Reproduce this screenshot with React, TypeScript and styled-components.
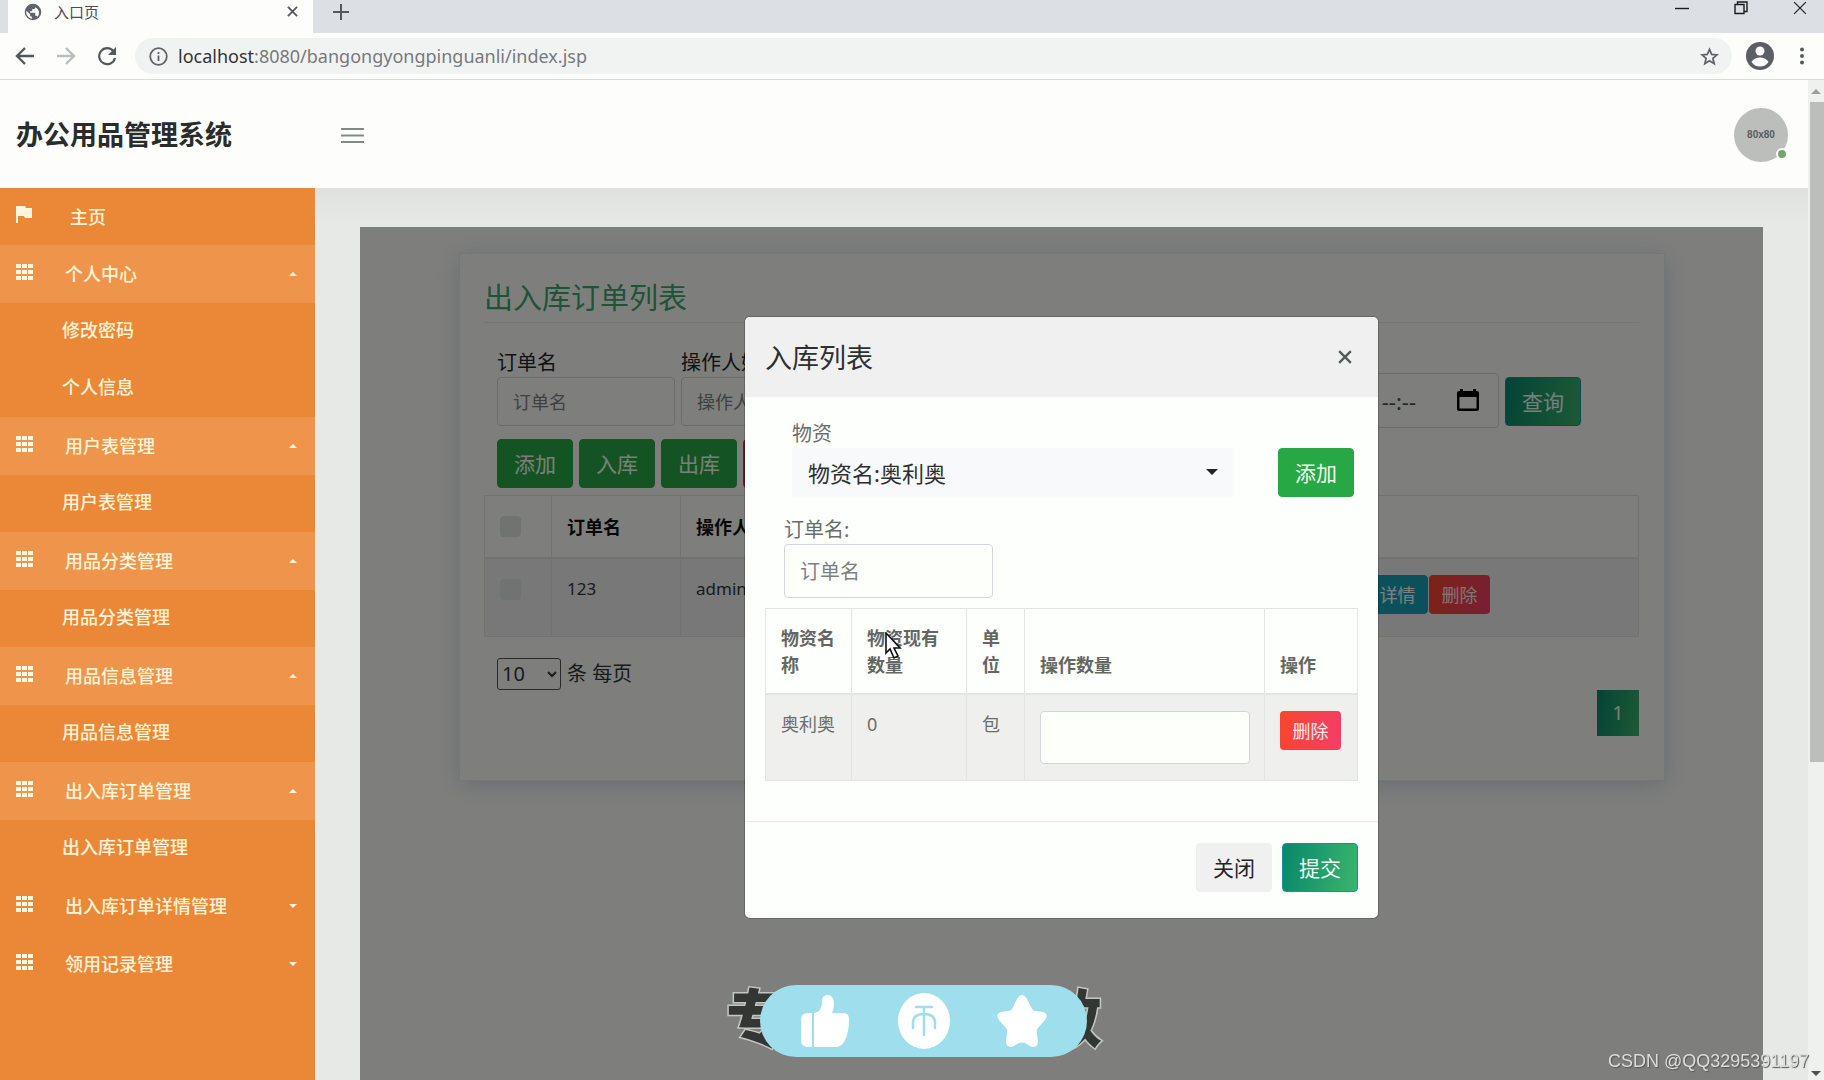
import React from "react";
import styled, { createGlobalStyle, css } from "styled-components";

const GlobalStyle = createGlobalStyle`
  *, *::before, *::after { box-sizing: border-box; }
  body {
    margin: 0;
    overflow: hidden;
    background: #fdfefc;
    font-family: "Noto Sans", "Noto Sans CJK SC", sans-serif;
    font-size: 18px;
    color: #212529;
  }
  button, input, select { font-family: inherit; margin: 0; }
  button { cursor: pointer; }
`;

/* ---------- browser window ---------- */

const Window = styled.div`
  display: flex;
  flex-direction: column;
  height: 100vh;
  overflow: hidden;
`;

const TabStrip = styled.div`
  display: flex;
  flex: none;
  height: 33px;
  padding-left: 8px;
  background: #dce0e4;
`;

const Tab = styled.div`
  display: flex;
  align-items: center;
  width: 305px;
  height: 33px;
  padding: 0 15px 10px 16px;
  gap: 12px;
  background: #fdfefc;
  font-size: 15px;
  line-height: 24px;
  color: #4a4d51;
  span { flex: 1; }
`;

const PlainButton = styled.button`
  display: flex;
  align-items: center;
  justify-content: center;
  padding: 0;
  border: 0;
  background: none;
  color: #55585b;
`;

const NewTab = styled(PlainButton)`
  width: 28px;
  height: 24px;
  margin-left: 14px;
`;

const WindowControls = styled.div`
  display: flex;
  align-items: flex-start;
  gap: 43px;
  margin-left: auto;
  padding: 0 16px 0 0;
  button { width: 16px; height: 16px; color: #1c1c1c; }
`;

const Toolbar = styled.div`
  display: flex;
  flex: none;
  align-items: center;
  height: 47px;
  padding: 0 15px 0 15px;
  border-bottom: 1px solid #d9dbdc;
`;

const NavButtons = styled.div`
  display: flex;
  gap: 21px;
  margin-right: 18px;
  button { width: 20px; height: 20px; }
`;

const AddressBar = styled.div`
  display: flex;
  flex: 1;
  align-items: center;
  height: 36px;
  padding: 0 13px 0 14px;
  gap: 10px;
  border-radius: 18px;
  background: #f1f3f3;
  color: #5f6368;
`;

const Address = styled.div`
  flex: 1;
  font-size: 18px;
  line-height: 24px;
  color: #777a7d;
  b { font-weight: 400; color: #303336; }
`;

const ToolbarEnd = styled.div`
  display: flex;
  align-items: center;
  gap: 21px;
  margin-left: 14px;
`;

const Viewport = styled.div`
  display: flex;
  flex: 1;
  min-height: 0;
`;

const ScrollBar = styled.div`
  display: flex;
  flex: none;
  flex-direction: column;
  align-items: center;
  width: 16px;
  padding: 9px 0 4px;
  background: #eff1ee;
  color: #555;
`;

const ScrollThumb = styled.div`
  width: 14px;
  height: 660px;
  margin: 8px 0 auto 2px;
  background: #bcbebb;
`;

/* ---------- admin page ---------- */

const Page = styled.div`
  display: flex;
  flex: 1;
  flex-direction: column;
  min-width: 0;
`;

const PageHeader = styled.header`
  display: flex;
  flex: none;
  align-items: center;
  height: 108px;
  padding: 2px 20px 0 16px;
  background: #fdfefc;
`;

const Brand = styled.h1`
  width: 325px;
  margin: 0;
  font-size: 27px;
  line-height: 36px;
  font-weight: 700;
  color: #2a2c2b;
`;

const MenuToggle = styled(PlainButton)`
  color: #858785;
`;

const Avatar = styled.div`
  position: relative;
  display: flex;
  align-items: center;
  justify-content: center;
  width: 54px;
  height: 54px;
  margin-left: auto;
  border-radius: 50%;
  background: #bcbebb;
  font: 700 10px/16px "Liberation Sans", sans-serif;
  color: #5a5c5a;
  &::after {
    content: "";
    position: absolute;
    right: 0;
    bottom: 2px;
    width: 12px;
    height: 12px;
    border: 2px solid #fdfefc;
    border-radius: 50%;
    background: #6fa86f;
  }
`;

const PageBody = styled.div`
  display: grid;
  grid-template-columns: 315px 1fr;
  flex: 1;
  min-height: 0;
`;

const Sidebar = styled.nav`
  background: #eb8837;
  overflow: hidden;
`;

const MenuLink = styled.a<{ $kind: "home" | "group" | "leaf"; $open?: boolean }>`
  display: flex;
  align-items: center;
  height: ${(p) => (p.$kind === "group" ? 58 : 57)}px;
  padding: ${(p) => (p.$kind === "leaf" ? "0 18px 3px 62px" : "0 18px 0 16px")};
  background: ${(p) => (p.$open ? "#ee954b" : "transparent")};
  font-size: 18px;
  line-height: 28px;
  font-weight: 500;
  color: #fdf3d8;
  text-decoration: none;
  svg { margin-bottom: 4px; }
  span { flex: 1; margin-left: ${(p) => (p.$kind === "home" ? 38 : p.$kind === "group" ? 32 : 0)}px; }
`;

const Caret = styled.i<{ $up?: boolean; $size?: number; $color?: string }>`
  border: ${(p) => p.$size ?? 4}px solid transparent;
  ${(p) =>
    p.$up
      ? css`border-bottom-color: ${p.$color ?? "#fff3dc"}; border-top-width: 0;`
      : css`border-top-color: ${p.$color ?? "#fff3dc"}; border-bottom-width: 0;`}
`;

const Main = styled.main`
  display: flex;
  min-width: 0;
  min-height: 0;
  padding: 39px 45px 0;
  background: linear-gradient(#dfe1de, #e7e9e6 38px);
`;

const Frame = styled.section`
  position: relative;
  flex: 1;
  min-width: 0;
  overflow: hidden;
  padding: 26px 98px 0 99px;
  background: #fdfffb;
`;

const Card = styled.div`
  padding: 24px 25px 44px 24px;
  border: 1px solid #ebedf2;
  background: #fdfffb;
  box-shadow: 0 4px 24px rgba(60, 60, 110, 0.22);
`;

const CardTitle = styled.h2`
  margin: 0;
  padding-bottom: 4px;
  border-bottom: 1px solid #eceeeb;
  font-size: 29px;
  line-height: 40px;
  font-weight: 400;
  color: #3aa86c;
`;

const FilterForm = styled.form`
  display: flex;
  align-items: flex-end;
  gap: 6px;
  margin-top: 22px;
  padding-left: 13px;
`;

const Field = styled.label<{ $width: number; $lift?: boolean }>`
  position: relative;
  display: flex;
  flex-direction: column;
  width: ${(p) => p.$width}px;
  padding-bottom: ${(p) => (p.$lift ? 2 : 0)}px;
  font-size: 20px;
  line-height: 28px;
  white-space: nowrap;
  svg { position: absolute; right: 20px; bottom: 16px; }
`;

const TextBox = styled.input<{ $h: number; $size?: number; $date?: boolean }>`
  width: 100%;
  height: ${(p) => p.$h}px;
  padding: 0 ${(p) => (p.$date ? 82 : 15)}px 0 15px;
  border: 1px solid #d3d6d8;
  border-radius: 4px;
  background: #fdfffb;
  font-size: ${(p) => p.$size ?? 18}px;
  text-align: ${(p) => (p.$date ? "right" : "left")};
  color: #495057;
  &::placeholder { color: ${(p) => (p.$date ? "#495057" : "#7c8084")}; opacity: 1; }
`;

type Tone = "success" | "danger" | "brand" | "light" | "info" | "hot";

const tones: Record<Tone, string> = {
  success: "background: #28a745; border-color: #28a745; color: #f4fff4;",
  danger: "background: #dc3545; border-color: #dc3545; color: #fff;",
  brand: "background: linear-gradient(100deg, #07886a, #3cb46e); border-color: #1990a4; color: #effff4;",
  light: "background: #eff0ef; border-color: #eff0ef; color: #212529;",
  info: "background: #17a2b8; border-color: #17a2b8; color: #fff;",
  hot: "background: linear-gradient(100deg, #f9452d, #f33e68); border-color: transparent; background-origin: border-box; color: #ffe9ec;",
};

const Button = styled.button<{ $tone: Tone; $small?: boolean }>`
  flex: none;
  width: ${(p) => (p.$small ? 61 : 76)}px;
  height: ${(p) => (p.$small ? 39 : 49)}px;
  padding: 0;
  border: 1px solid;
  border-radius: 4px;
  font-size: ${(p) => (p.$small ? 18 : 21)}px;
  line-height: 28px;
  ${(p) => tones[p.$tone]}
`;

const FilterButton = styled.div`
  display: flex;
  padding-bottom: 2px;
`;

const Actions = styled.div`
  display: flex;
  gap: 6px;
  margin: 11px 0 7px;
  padding-left: 13px;
`;

const Table = styled.table`
  width: 100%;
  border-collapse: collapse;
  table-layout: fixed;
  font-size: 18px;
  line-height: 27px;
  color: #6b6d6b;
  th, td {
    padding: 16px 14px 14px 15px;
    border: 1px solid #e3e5e2;
    text-align: left;
  }
  th {
    vertical-align: bottom;
    border-bottom-width: 2px;
    font-weight: 700;
    color: #646664;
  }
  td {
    padding-bottom: 16px;
    vertical-align: top;
    background: #eff0ee;
  }
  th:first-child, td:first-child { padding-right: 10px; }
`;

const OrdersTable = styled(Table)`
  color: #333638;
  th { padding-bottom: 16px; color: #111; }
  td { height: 78px; font-size: 17px; }
`;

const Check = styled.input.attrs({ type: "checkbox" })`
  display: block;
  appearance: none;
  width: 21px;
  height: 21px;
  margin: 4px 0;
  border-radius: 4px;
  background: #e2e4e4;
`;

const Inline = styled.div`
  display: flex;
  gap: 1px;
`;

const PageSize = styled.label`
  display: flex;
  align-items: center;
  gap: 6px;
  margin-top: 21px;
  padding-left: 13px;
  font-size: 20px;
  line-height: 32px;
  color: #333638;
  select {
    width: 64px;
    height: 32px;
    border: 1px solid #555;
    border-radius: 3px;
    background: #fdfffb;
    font-size: 20px;
    color: #333638;
  }
`;

const Pager = styled.div`
  display: flex;
  justify-content: flex-end;
  button {
    width: 42px;
    height: 46px;
    border: 0;
    background: linear-gradient(100deg, #07886a, #3cb46e);
    font-size: 19px;
    color: #effff4;
  }
`;

/* ---------- dialog ---------- */

const Backdrop = styled.div`
  position: absolute;
  inset: 0;
  display: flex;
  align-items: flex-start;
  justify-content: center;
  padding-top: 90px;
  background: rgba(0, 0, 0, 0.5);
`;

const Dialog = styled.div`
  width: 633px;
  border-radius: 5px;
  overflow: hidden;
  background: #fdfffc;
  box-shadow: 0 0 0 1px rgba(0, 0, 0, 0.2);
  color: #6b6d6b;
`;

const DialogHeader = styled.div`
  display: flex;
  align-items: center;
  justify-content: space-between;
  height: 80px;
  padding: 0 26px 0 20px;
  background: #eff0ef;
  h3 {
    margin: 0;
    padding-top: 2px;
    font-size: 27px;
    line-height: 40px;
    font-weight: 400;
    color: #2d3032;
  }
`;

const DialogBody = styled.div`
  padding: 23px 20px 40px;
`;

const PickRow = styled.div`
  display: flex;
  align-items: flex-end;
  justify-content: space-between;
  margin-bottom: 19px;
  padding: 0 4px 0 27px;
`;

const SelectBox = styled.label`
  position: relative;
  width: 442px;
  font-size: 20px;
  line-height: 28px;
  select {
    display: block;
    width: 100%;
    height: 49px;
    padding: 0 16px;
    appearance: none;
    border: 0;
    background: #f8f9fa;
    font-size: 22px;
    color: #2d3032;
  }
  i { position: absolute; right: 16px; bottom: 22px; }
`;

const OrderField = styled.div`
  margin-bottom: 10px;
  padding-left: 19px;
`;

const DialogFooter = styled.div`
  display: flex;
  justify-content: flex-end;
  gap: 10px;
  padding: 21px 20px 26px;
  border-top: 1px solid #e9ebe9;
`;

const Pointer = styled.svg`
  position: fixed;
  left: 885px;
  top: 632px;
`;

/* ---------- stickers over the page ---------- */

const Sticker = styled.div`
  position: fixed;
  left: 0;
  right: 0;
  bottom: 23px;
  display: flex;
  justify-content: center;
  pointer-events: none;
`;

const Slogan = styled.div`
  position: relative;
  display: flex;
  justify-content: space-between;
  width: 376px;
  height: 72px;
  margin-left: 4px;
  font-size: 62px;
  line-height: 66px;
  font-weight: 900;
  color: #333633;
  -webkit-text-stroke: 3px #c4c6c3;
  paint-order: stroke fill;
`;

const Pill = styled.div`
  position: absolute;
  left: 34px;
  top: 0;
  display: flex;
  align-items: center;
  justify-content: space-between;
  width: 327px;
  height: 72px;
  padding: 0 40px;
  border-radius: 36px;
  background: #9fdfed;
`;

const Watermark = styled.div`
  position: fixed;
  right: 15px;
  bottom: 8px;
  font: 18px/22px "Liberation Sans", sans-serif;
  color: #dcdedb;
  text-shadow: 1px 1px 1px #555;
`;

/* ---------- icons ---------- */

const stroke = (width: number) => ({ fill: "none", stroke: "currentColor", strokeWidth: width });

const Globe = () => (
  <svg width="18" height="18" viewBox="0 0 24 24" fill="#5f6368">
    <path d="M12 1a11 11 0 1 0 0 22 11 11 0 0 0 0-22zM11 20.900C6.500 20.400 3 16.600 3 12c0-.6.100-1.200.2-1.800L8 15v1c0 1.100.9 2 2 2l1 2.900zm6.900-2.500c-.3-.8-1-1.400-1.900-1.400h-1v-3c0-.6-.4-1-1-1H8v-2h2c.6 0 1-.4 1-1V8h2c1.100 0 2-.9 2-2v-.4c2.900 1.200 5 4.100 5 7.400 0 2.100-.8 4-2.100 5.400z" />
  </svg>
);

const Cross = ({ size, width = 2 }: { size: number; width?: number }) => (
  <svg width={size} height={size} viewBox="0 0 12 12" {...stroke(width)}>
    <path d="M1 1l10 10M11 1L1 11" />
  </svg>
);

const Arrow = ({ flip }: { flip?: boolean }) => (
  <svg width="20" height="20" viewBox="0 0 20 20" {...stroke(2.4)}>
    {flip ? <path d="M1 10h17M10 2l8 8-8 8" /> : <path d="M19 10H2M10 2l-8 8 8 8" />}
  </svg>
);

const Grid = () => (
  <svg width="17" height="16" viewBox="0 0 17 16" fill="#fff6e0">
    {[0, 6, 12].map((y) => [0, 6, 12].map((x) => <rect key={x + "-" + y} x={x} y={y} width="5" height="4" />))}
  </svg>
);

const Flag = () => (
  <svg width="16" height="17" viewBox="0 0 16 17" fill="#fff6e0">
    <path d="M0 0h9l1 2h6v10H9l-1-2H2v7H0z" />
  </svg>
);

const CalendarIcon = () => (
  <svg width="22" height="24" viewBox="0 0 22 24" fill="#000">
    <path d="M3 1h3v2h10V1h3v2h1q2 0 2 2v16q0 2-2 2H2q-2 0-2-2V5q0-2 2-2h1zM2.500 9v11.500h17V9z" fillRule="evenodd" />
  </svg>
);

/* ---------- content ---------- */

type MenuGroup = { title: string; children: string[] };

const menu: MenuGroup[] = [
  { title: "个人中心", children: ["修改密码", "个人信息"] },
  { title: "用户表管理", children: ["用户表管理"] },
  { title: "用品分类管理", children: ["用品分类管理"] },
  { title: "用品信息管理", children: ["用品信息管理"] },
  { title: "出入库订单管理", children: ["出入库订单管理"] },
  { title: "出入库订单详情管理", children: [] },
  { title: "领用记录管理", children: [] },
];

const BrowserChrome = () => (
  <>
    <TabStrip>
      <Tab>
        <Globe />
        <span>入口页</span>
        <PlainButton aria-label="关闭标签页"><Cross size={11} /></PlainButton>
      </Tab>
      <NewTab aria-label="新标签页">
        <svg width="16" height="16" viewBox="0 0 16 16" {...stroke(2)}><path d="M8 0v16M0 8h16" /></svg>
      </NewTab>
      <WindowControls>
        <PlainButton aria-label="最小化">
          <svg width="14" height="16" viewBox="0 0 14 16" {...stroke(1.4)}><path d="M0 8.500h14" /></svg>
        </PlainButton>
        <PlainButton aria-label="还原">
          <svg width="14" height="16" viewBox="0 0 14 16" {...stroke(1.4)}><path d="M1 4.500h9v9H1zM3.500 4.500V2H13v9.500h-3" /></svg>
        </PlainButton>
        <PlainButton aria-label="关闭"><Cross size={14} width={1} /></PlainButton>
      </WindowControls>
    </TabStrip>
    <Toolbar>
      <NavButtons>
        <PlainButton aria-label="后退"><Arrow /></PlainButton>
        <PlainButton aria-label="前进" style={{ color: "#bbbdbf" }}><Arrow flip /></PlainButton>
        <PlainButton aria-label="刷新">
          <svg width="20" height="20" viewBox="0 0 20 20" {...stroke(2.2)}>
            <path d="M16.500 5.200A8 8 0 1 0 18 12" />
            <path d="M19 1v8h-8z" fill="currentColor" stroke="none" />
          </svg>
        </PlainButton>
      </NavButtons>
      <AddressBar>
        <svg width="19" height="19" viewBox="0 0 19 19" {...stroke(1.8)}>
          <circle cx="9.500" cy="9.500" r="8.300" />
          <path d="M9.500 8.500v5.500M9.500 5v2" />
        </svg>
        <Address><b>localhost</b>:8080/bangongyongpinguanli/index.jsp</Address>
        <svg width="19" height="19" viewBox="0 0 24 24" {...stroke(2.2)}>
          <path d="M12 3l2.700 6.300 6.800.6-5.200 4.500 1.600 6.700L12 17.500l-5.900 3.600 1.600-6.700L2.500 9.900l6.800-.6z" />
        </svg>
      </AddressBar>
      <ToolbarEnd>
        <PlainButton aria-label="用户">
          <svg width="28" height="28" viewBox="0 0 28 28">
            <circle cx="14" cy="14" r="14" fill="#5b5e62" />
            <circle cx="14" cy="9" r="4.500" fill="#fff" />
            <path d="M5.500 20q2.500-4.500 8.500-4.500t8.500 4.500q-3.200 4.500-8.500 4.500T5.500 20z" fill="#fff" />
          </svg>
        </PlainButton>
        <PlainButton aria-label="菜单">
          <svg width="14" height="18" viewBox="0 0 14 18" fill="currentColor">
            <circle cx="7" cy="2.500" r="2" /><circle cx="7" cy="9" r="2" /><circle cx="7" cy="15.500" r="2" />
          </svg>
        </PlainButton>
      </ToolbarEnd>
    </Toolbar>
  </>
);

const SideMenu = () => (
  <Sidebar>
    <MenuLink href="#home" $kind="home"><Flag /><span>主页</span></MenuLink>
    {menu.map((group) => {
      const open = group.children.length > 0;
      return (
        <React.Fragment key={group.title}>
          <MenuLink href="#group" $kind="group" $open={open}>
            <Grid /><span>{group.title}</span><Caret $up={open} />
          </MenuLink>
          {group.children.map((child) => (
            <MenuLink key={child} href="#page" $kind="leaf"><span>{child}</span></MenuLink>
          ))}
        </React.Fragment>
      );
    })}
  </Sidebar>
);

const DateField = ({ label }: { label: string }) => (
  <Field $width={314}>
    {label}
    <TextBox $h={55} $date $size={22} placeholder="年/月/日 --:--" />
    <CalendarIcon />
  </Field>
);

const OrderList = () => (
  <Card>
    <CardTitle>出入库订单列表</CardTitle>
    <FilterForm onSubmit={(e) => e.preventDefault()}>
      <Field $width={178} $lift>订单名<TextBox $h={49} placeholder="订单名" /></Field>
      <Field $width={178} $lift>操作人姓名<TextBox $h={49} placeholder="操作人姓名" /></Field>
      <DateField label="开始时间" />
      <DateField label="结束时间" />
      <FilterButton><Button $tone="brand">查询</Button></FilterButton>
    </FilterForm>
    <Actions>
      <Button $tone="success">添加</Button>
      <Button $tone="success">入库</Button>
      <Button $tone="success">出库</Button>
      <Button $tone="danger">删除</Button>
    </Actions>
    <OrdersTable>
      <colgroup><col width="67" /><col width="129" /><col /><col /><col width="349" /></colgroup>
      <thead>
        <tr><th><Check aria-label="全选" /></th><th>订单名</th><th>操作人姓名</th><th>操作时间</th><th>操作</th></tr>
      </thead>
      <tbody>
        <tr>
          <td><Check aria-label="选择 123" /></td><td>123</td><td>admin</td><td />
          <td>
            <Inline>
              <Button $tone="info" $small>修改</Button>
              <Button $tone="info" $small>详情</Button>
              <Button $tone="hot" $small>删除</Button>
            </Inline>
          </td>
        </tr>
      </tbody>
    </OrdersTable>
    <PageSize><select defaultValue="10"><option>10</option><option>25</option></select>条 每页</PageSize>
    <Pager><button>1</button></Pager>
  </Card>
);

const StockInDialog = () => (
  <Dialog role="dialog" aria-label="入库列表">
    <DialogHeader>
      <h3>入库列表</h3>
      <PlainButton aria-label="关闭"><Cross size={14} width={2} /></PlainButton>
    </DialogHeader>
    <DialogBody>
      <PickRow>
        <SelectBox>
          物资
          <select><option>物资名:奥利奥</option></select>
          <Caret $size={6} $color="#212529" />
        </SelectBox>
        <Button $tone="success">添加</Button>
      </PickRow>
      <OrderField>
        <Field $width={209}>订单名:<TextBox $h={54} $size={20} placeholder="订单名" /></Field>
      </OrderField>
      <Table>
        <colgroup><col width="86" /><col width="115" /><col width="58" /><col /><col width="93" /></colgroup>
        <thead>
          <tr><th>物资名称</th><th>物资现有数量</th><th>单位</th><th>操作数量</th><th>操作</th></tr>
        </thead>
        <tbody>
          <tr>
            <td>奥利奥</td><td>0</td><td>包</td>
            <td><TextBox $h={53} aria-label="操作数量" /></td>
            <td><Button $tone="hot" $small>删除</Button></td>
          </tr>
        </tbody>
      </Table>
    </DialogBody>
    <DialogFooter>
      <Button $tone="light">关闭</Button>
      <Button $tone="brand">提交</Button>
    </DialogFooter>
  </Dialog>
);

const Stickers = () => (
  <>
    <Sticker>
      <Slogan>
        <span>专</span><span>效</span>
        <Pill>
          <svg width="50" height="54" viewBox="0 0 50 54">
            <path fill="#fff" d="M8 19h4v34H8q-7 0-7-7V26q0-7 7-7zM14 19q8-1 8-11 0-7 5-7 7 0 7 9 0 5-2 9h12q5 0 5 6 0 14-4 21-3 7-9 7H14z" />
          </svg>
          <svg width="54" height="56" viewBox="0 0 54 56">
            <ellipse cx="27" cy="28" rx="26" ry="28" fill="#fff" />
            <path d="M19 14h16M27 14v28M16 35v-5q0-9 11-9t11 9v5" fill="none" stroke="#9fdfed" strokeWidth="2.500" strokeLinecap="round" />
          </svg>
          <svg width="50" height="54" viewBox="0 0 50 54" fill="#fff">
            <path d="M20 5q5-8 10 0l5 10q1 2 4 2l7 1q6 2 2 8l-7 8q-2 2-1 5l1 9q-1 7-8 4l-5-3q-3-1-6 0l-5 3q-7 3-8-4l1-9q1-3-1-5l-7-8q-4-6 2-8l7-1q3 0 4-2z" />
          </svg>
        </Pill>
      </Slogan>
    </Sticker>
    <Watermark>CSDN @QQ3295391197</Watermark>
  </>
);

export default function App() {
  return (
    <Window>
      <GlobalStyle />
      <BrowserChrome />
      <Viewport>
        <Page>
          <PageHeader>
            <Brand>办公用品管理系统</Brand>
            <MenuToggle aria-label="切换菜单">
              <svg width="23" height="17" viewBox="0 0 23 17" {...stroke(2)}><path d="M0 2h23M0 8.500h23M0 15h23" /></svg>
            </MenuToggle>
            <Avatar>80x80</Avatar>
          </PageHeader>
          <PageBody>
            <SideMenu />
            <Main>
              <Frame>
                <OrderList />
                <Backdrop><StockInDialog /></Backdrop>
              </Frame>
            </Main>
          </PageBody>
        </Page>
        <ScrollBar>
          <Caret $up $size={5} $color="#9b9d9a" />
          <ScrollThumb />
          <Caret $size={5} $color="#505050" />
        </ScrollBar>
      </Viewport>
      <Pointer width="17" height="28" viewBox="0 0 17 28">
        <path d="M1 1v20l4-4 4 9 4-2-4-8h6z" fill="#fff" stroke="#111" strokeWidth="1.600" />
      </Pointer>
      <Stickers />
    </Window>
  );
}
